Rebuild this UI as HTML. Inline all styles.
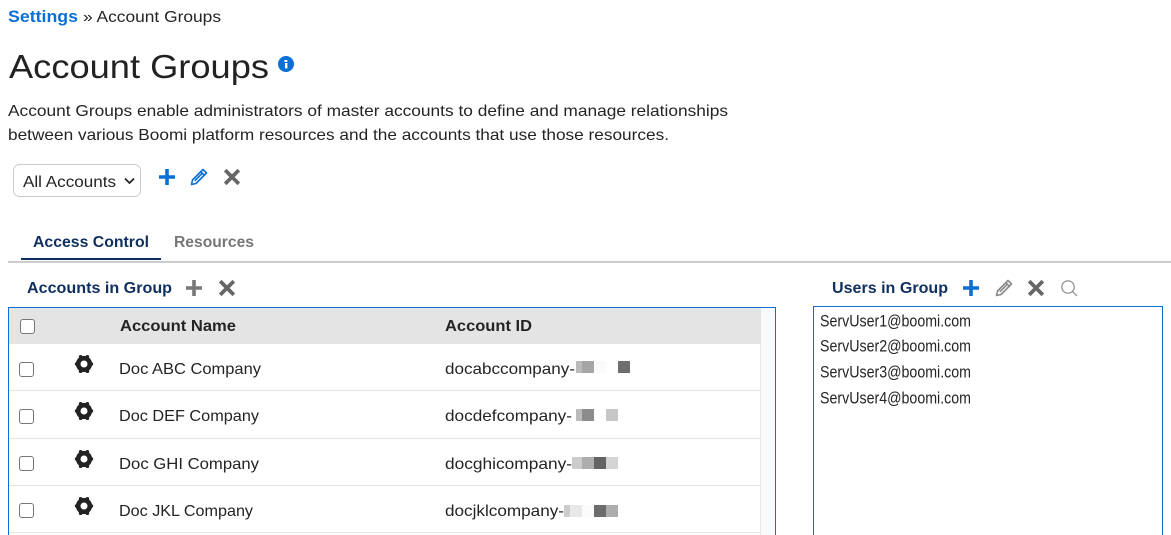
<!DOCTYPE html>
<html lang="en">
<head>
<meta charset="utf-8">
<title>Account Groups</title>
<style>
html,body{margin:0;padding:0;background:#fff;width:1171px;height:535px;overflow:hidden}
svg{display:block;position:absolute;left:0;top:0}
text{font-family:"Liberation Sans",sans-serif;font-size:16px;fill:#242424}
.b{font-weight:700}
.navy{fill:#0f2f5e;font-weight:700}
.u{font-size:16.5px}
</style>
</head>
<body>
<svg width="1171" height="535" viewBox="0 0 1171 535" xmlns="http://www.w3.org/2000/svg">
<defs>
<g id="plus"><path d="M-8 0H8M0-8V8" fill="none" stroke-width="3.6"/></g>
<g id="x"><path d="M-6.8-6.8L6.8 6.8M6.8-6.8L-6.8 6.8" fill="none" stroke-width="3.8"/></g>
<g id="pencil"><path d="M4-7.5L7.5-4L-3 6.5L-7.5 7.5L-6.5 3ZM1.8-5.3L5.3-1.8M2.8-3.2L-4.2 3.8" fill="none" stroke-width="1.6" stroke-linejoin="round"/></g>
<g id="gear" fill="#222"><circle r="5.8" fill="none" stroke="#222" stroke-width="4.6"/><circle cx="-3.4" cy="-7.2" r="1.8"/><circle cx="3.4" cy="-7.2" r="1.8"/><circle cx="7.6" cy="0" r="1.6"/><circle cx="-7.6" cy="0" r="1.6"/><circle cx="-3.4" cy="7.2" r="1.8"/><circle cx="3.4" cy="7.2" r="1.8"/></g>
</defs>

<text x="8" y="22" class="b" textLength="70" lengthAdjust="spacingAndGlyphs" style="fill:#0b6fd6;font-size:16.5px">Settings</text>
<text x="83" y="22" textLength="138" lengthAdjust="spacingAndGlyphs">» Account Groups</text>

<text x="9" y="78" textLength="260" lengthAdjust="spacingAndGlyphs" style="font-size:33px;fill:#222">Account Groups</text>
<circle cx="286" cy="64" r="8" fill="#0b6fd6"/>
<rect x="285" y="63" width="2.4" height="5.4" fill="#fff"/><rect x="284.4" y="60" width="3" height="2" fill="#fff"/>

<text x="8" y="116" textLength="720" lengthAdjust="spacingAndGlyphs">Account Groups enable administrators of master accounts to define and manage relationships</text>
<text x="8" y="140" textLength="661" lengthAdjust="spacingAndGlyphs">between various Boomi platform resources and the accounts that use those resources.</text>

<rect x="13.5" y="164.5" width="127" height="32" rx="6" fill="#fff" stroke="#ccc"/>
<text x="23" y="187" textLength="93" lengthAdjust="spacingAndGlyphs">All Accounts</text>
<path d="M125 178.5L129.5 183L134 178.5" fill="none" stroke="#222" stroke-width="1.7"/>
<use href="#plus" x="167" y="177" stroke="#0b6fd6"/>
<use href="#pencil" x="199" y="177" stroke="#0b6fd6"/>
<use href="#x" x="232" y="177" stroke="#666"/>

<text x="33" y="247" class="navy" textLength="116" lengthAdjust="spacingAndGlyphs">Access Control</text>
<text x="174" y="247" class="b" textLength="80" lengthAdjust="spacingAndGlyphs" style="fill:#777">Resources</text>
<rect x="8" y="261" width="1163" height="2" fill="#ccc"/>
<rect x="21" y="258" width="140" height="2" fill="#0f2f5e"/>

<text x="27" y="293" class="navy" textLength="145" lengthAdjust="spacingAndGlyphs">Accounts in Group</text>
<use href="#plus" x="194" y="288" stroke="#777"/>
<use href="#x" x="227" y="288" stroke="#666"/>

<rect x="8.5" y="307.5" width="767" height="240" fill="#fff" stroke="#0b6fd6"/>
<rect x="9" y="308" width="752" height="36" fill="#e4e4e4"/>
<rect x="761" y="308" width="14" height="227" fill="#fafafa"/>
<rect x="760" y="344" width="1" height="191" fill="#e6e6e6"/>
<g fill="#e4e4e4">
<rect x="9" y="390" width="752" height="1"/>
<rect x="9" y="438" width="752" height="1"/>
<rect x="9" y="485" width="752" height="1"/>
<rect x="9" y="532" width="752" height="1"/>
</g>
<g fill="#fff" stroke="#767676" stroke-width="1">
<rect x="20.5" y="319.5" width="14" height="14" rx="2.5"/>
<rect x="19.5" y="362.5" width="14" height="14" rx="2.5"/>
<rect x="19.5" y="409.5" width="14" height="14" rx="2.5"/>
<rect x="19.5" y="456.5" width="14" height="14" rx="2.5"/>
<rect x="19.5" y="503.5" width="14" height="14" rx="2.5"/>
</g>
<text x="120" y="331" class="b" textLength="116" lengthAdjust="spacingAndGlyphs">Account Name</text>
<text x="445" y="331" class="b" textLength="87" lengthAdjust="spacingAndGlyphs">Account ID</text>

<use href="#gear" x="84" y="364"/>
<use href="#gear" x="84" y="411"/>
<use href="#gear" x="84" y="459"/>
<use href="#gear" x="84" y="506"/>

<text x="119" y="374" textLength="142" lengthAdjust="spacingAndGlyphs">Doc ABC Company</text>
<text x="119" y="421" textLength="140" lengthAdjust="spacingAndGlyphs">Doc DEF Company</text>
<text x="119" y="469" textLength="140" lengthAdjust="spacingAndGlyphs">Doc GHI Company</text>
<text x="119" y="516" textLength="134" lengthAdjust="spacingAndGlyphs">Doc JKL Company</text>

<text x="445" y="374" textLength="130" lengthAdjust="spacingAndGlyphs">docabccompany-</text>
<text x="445" y="421" textLength="127" lengthAdjust="spacingAndGlyphs">docdefcompany-</text>
<text x="445" y="469" textLength="127" lengthAdjust="spacingAndGlyphs">docghicompany-</text>
<text x="445" y="516" textLength="119" lengthAdjust="spacingAndGlyphs">docjklcompany-</text>

<rect x="576" y="361" width="6" height="12" fill="#bbb"/>
<rect x="582" y="361" width="12" height="12" fill="#a6a6a6"/>
<rect x="594" y="361" width="12" height="12" fill="#fafafa"/>
<rect x="618" y="361" width="12" height="12" fill="#6e6e6e"/>

<rect x="576" y="409" width="6" height="12" fill="#bbb"/>
<rect x="582" y="409" width="12" height="12" fill="#8c8c8c"/>
<rect x="606" y="409" width="12" height="12" fill="#c6c6c6"/>

<rect x="572" y="457" width="10" height="12" fill="#ccc"/>
<rect x="582" y="457" width="12" height="12" fill="#adadad"/>
<rect x="594" y="457" width="12" height="12" fill="#636363"/>
<rect x="606" y="457" width="12" height="12" fill="#d4d4d4"/>

<rect x="564" y="505" width="6" height="12" fill="#ccc"/>
<rect x="570" y="505" width="12" height="12" fill="#e8e8e8"/>
<rect x="582" y="505" width="12" height="12" fill="#fbfbfb"/>
<rect x="594" y="505" width="12" height="12" fill="#6c6c6c"/>
<rect x="606" y="505" width="12" height="12" fill="#adadad"/>

<text x="832" y="293" class="navy" textLength="116" lengthAdjust="spacingAndGlyphs">Users in Group</text>
<use href="#plus" x="971" y="288" stroke="#0b6fd6"/>
<use href="#pencil" x="1004" y="288" stroke="#888"/>
<use href="#x" x="1036" y="288" stroke="#666"/>
<circle cx="1068" cy="287" r="6.2" fill="none" stroke="#888" stroke-width="1.2"/>
<path d="M1072.4 291.4L1077 296" fill="none" stroke="#888" stroke-width="1.2"/>

<rect x="813.5" y="306.5" width="349" height="240" fill="#fff" stroke="#0b6fd6"/>
<text x="820" y="326.5" class="u" textLength="151" lengthAdjust="spacingAndGlyphs">ServUser1@boomi.com</text>
<text x="820" y="351.5" class="u" textLength="151" lengthAdjust="spacingAndGlyphs">ServUser2@boomi.com</text>
<text x="820" y="377.5" class="u" textLength="151" lengthAdjust="spacingAndGlyphs">ServUser3@boomi.com</text>
<text x="820" y="403.5" class="u" textLength="151" lengthAdjust="spacingAndGlyphs">ServUser4@boomi.com</text>
</svg>
</body>
</html>
